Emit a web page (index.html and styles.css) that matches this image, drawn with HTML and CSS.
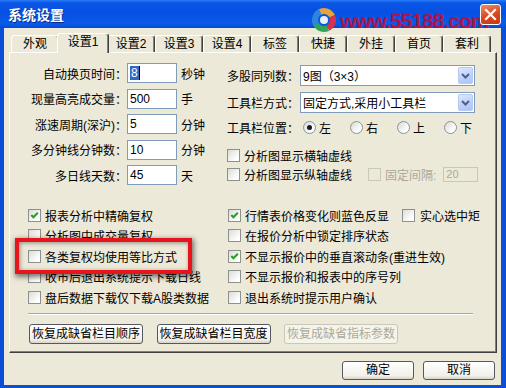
FILE: index.html
```html
<!DOCTYPE html>
<html lang="zh-CN">
<head>
  <meta charset="UTF-8">
  <title>系统设置</title>
  <link rel="stylesheet" href="styles.css">
</head>
<body>
<div class="window">
  <div class="titlebar">
    <span class="title">系统设置</span>
    <svg class="swirl" width="26" height="26" viewBox="0 0 26 26">
      <circle cx="13" cy="13" r="9" fill="none" stroke="#e9a23a" stroke-width="6" stroke-dasharray="15 42" transform="rotate(-120 13 13)"/>
      <circle cx="13" cy="13" r="9" fill="none" stroke="#d8324f" stroke-width="6" stroke-dasharray="14 43" transform="rotate(-25 13 13)"/>
      <circle cx="13" cy="13" r="9" fill="none" stroke="#33a35c" stroke-width="6" stroke-dasharray="14 43" transform="rotate(65 13 13)"/>
      <circle cx="13" cy="13" r="9" fill="none" stroke="#2f86d8" stroke-width="6" stroke-dasharray="15 42" transform="rotate(150 13 13)"/>
      <circle cx="13" cy="13" r="4" fill="#e8f0f8"/>
    </svg>
    <span class="site">www.55188.com</span>
    <span class="close">
      <svg width="19" height="19" viewBox="0 0 19 19"><path d="M5 5 L14 14 M14 5 L5 14" stroke="#fff" stroke-width="2.2" stroke-linecap="square"/></svg>
    </span>
  </div>

  <div class="frame">
    <div class="tabs">
      <span class="tab">外观</span>
      <span class="tab active">设置1</span>
      <span class="tab">设置2</span>
      <span class="tab">设置3</span>
      <span class="tab">设置4</span>
      <span class="tab">标签</span>
      <span class="tab">快捷</span>
      <span class="tab">外挂</span>
      <span class="tab">首页</span>
      <span class="tab">套利</span>
    </div>

    <div class="panel">
      <div class="top">
        <div class="fields">
          <div class="field"><label>自动换页时间：</label><span class="input"><span class="sel">8</span></span><span class="unit">秒钟</span></div>
          <div class="field"><label>现量高亮成交量：</label><span class="input">500</span><span class="unit">手</span></div>
          <div class="field"><label>涨速周期(深沪)：</label><span class="input">5</span><span class="unit">分钟</span></div>
          <div class="field"><label>多分钟线分钟数：</label><span class="input">10</span><span class="unit">分钟</span></div>
          <div class="field"><label>多日线天数：</label><span class="input">45</span><span class="unit">天</span></div>
        </div>

        <div class="options">
          <div class="opt-row first">
            <span class="lbl">多股同列数：</span>
            <span class="combo"><span class="combo-text">9图（3×3）</span><span class="drop"><svg width="13" height="15" viewBox="0 0 13 15"><path d="M3 6 L6.5 9.5 L10 6" fill="none" stroke="#4d6185" stroke-width="2"/></svg></span></span>
          </div>
          <div class="opt-row second">
            <span class="lbl">工具栏方式：</span>
            <span class="combo"><span class="combo-text">固定方式,采用小工具栏</span><span class="drop"><svg width="13" height="15" viewBox="0 0 13 15"><path d="M3 6 L6.5 9.5 L10 6" fill="none" stroke="#4d6185" stroke-width="2"/></svg></span></span>
          </div>
          <div class="opt-row radios">
            <span class="lbl">工具栏位置：</span>
            <span class="ritem"><span class="radio on"></span>左</span>
            <span class="ritem"><span class="radio"></span>右</span>
            <span class="ritem"><span class="radio"></span>上</span>
            <span class="ritem"><span class="radio"></span>下</span>
          </div>
          <div class="opt-row check1"><span class="cb"></span><span class="ctext">分析图显示横轴虚线</span></div>
          <div class="opt-row check2">
            <span class="cb"></span><span class="ctext">分析图显示纵轴虚线</span>
            <span class="cb off gap-cb"></span><span class="ctext dim">固定间隔:</span>
            <span class="input small off">20</span>
          </div>
        </div>
      </div>

      <div class="checks">
        <div class="col left">
          <div class="crow"><span class="cb"><svg width="11" height="11" viewBox="0 0 11 11"><path d="M2.3 5 L4.4 7.3 L8.8 2.8" fill="none" stroke="#21a121" stroke-width="2"/></svg></span><span class="ctext">报表分析中精确复权</span></div>
          <div class="crow"><span class="cb"></span><span class="ctext">分析图中成交量复权</span></div>
          <div class="crow"><span class="cb"></span><span class="ctext">各类复权均使用等比方式</span></div>
          <div class="crow"><span class="cb"></span><span class="ctext">收市后退出系统提示下载日线</span></div>
          <div class="crow"><span class="cb"></span><span class="ctext">盘后数据下载仅下载A股类数据</span></div>
        </div>
        <div class="col right">
          <div class="crow"><span class="cb"><svg width="11" height="11" viewBox="0 0 11 11"><path d="M2.3 5 L4.4 7.3 L8.8 2.8" fill="none" stroke="#21a121" stroke-width="2"/></svg></span><span class="ctext">行情表价格变化则蓝色反显</span><span class="cb solid-cb"></span><span class="ctext solid-text">实心选中矩</span></div>
          <div class="crow"><span class="cb"></span><span class="ctext">在报价分析中锁定排序状态</span></div>
          <div class="crow"><span class="cb"><svg width="11" height="11" viewBox="0 0 11 11"><path d="M2.3 5 L4.4 7.3 L8.8 2.8" fill="none" stroke="#21a121" stroke-width="2"/></svg></span><span class="ctext">不显示报价中的垂直滚动条(重进生效)</span></div>
          <div class="crow"><span class="cb"></span><span class="ctext">不显示报价和报表中的序号列</span></div>
          <div class="crow"><span class="cb"></span><span class="ctext">退出系统时提示用户确认</span></div>
        </div>
      </div>

      <div class="sep"></div>

      <div class="actions">
        <span class="btn wide">恢复成缺省栏目顺序</span>
        <span class="btn wide">恢复成缺省栏目宽度</span>
        <span class="btn wide disabled">恢复成缺省指标参数</span>
      </div>

      <div class="highlight"></div>
    </div>

    <div class="footer">
      <span class="btn small-btn">确定</span>
      <span class="btn small-btn">取消</span>
    </div>
  </div>
</div>
</body>
</html>
```

FILE: styles.css
```css
body {
  margin: 0;
  font-family: "Liberation Sans", "Noto Sans CJK SC", sans-serif;
  font-size: 12px;
  color: #000;
}
.window {
  width: 506px;
  height: 388px;
  display: flex;
  flex-direction: column;
  overflow: hidden;
}

/* title bar */
.titlebar {
  height: 28px;
  flex: none;
  position: relative;
  z-index: 3;
  display: flex;
  align-items: center;
  background: linear-gradient(180deg, #2a7cf6 0%, #0a56e6 10%, #0650e2 45%, #0a5ae8 85%, #0648d6 100%);
}
.title {
  margin-left: 8px;
  color: #fff;
  font-family: "Noto Sans CJK SC", sans-serif;
  font-weight: bold;
  font-size: 14px;
  line-height: 16px;
  text-shadow: 1px 1px 0 #0a2a8a;
}
.swirl {
  position: absolute;
  left: 311px;
  top: 7px;
}
.site {
  position: absolute;
  left: 340px;
  top: 10px;
  font-family: "Liberation Sans", sans-serif;
  font-weight: bold;
  font-size: 21px;
  line-height: 21px;
  letter-spacing: -1px;
  color: #a8164e;
}
.close {
  margin-left: auto;
  margin-right: 5px;
  width: 21px;
  height: 21px;
  box-sizing: border-box;
  border: 1px solid #fff;
  border-radius: 3px;
  background: linear-gradient(160deg, #ef8c6a, #d8461f 55%, #c23a14);
  display: flex;
  align-items: center;
  justify-content: center;
  position: relative;
}

/* frame */
.frame {
  flex: 1;
  display: flex;
  flex-direction: column;
  background: #ece9d8;
  border-style: solid;
  border-color: #0c4fd7;
  border-width: 0 5px 3px 4px;
}

/* tabs */
.tabs {
  display: flex;
  align-items: flex-end;
  height: 19px;
  margin-top: 5px;
  padding-left: 7px;
  position: relative;
  z-index: 1;
}
.tab {
  width: 48px;
  height: 17px;
  box-sizing: border-box;
  border: 1px solid;
  border-color: #fff #404040 transparent #fff;
  border-bottom: none;
  border-radius: 3px 3px 0 0;
  box-shadow: inset -1px 0 #808080;
  background: #ece9d8;
  text-align: center;
  line-height: 16px;
}
.tab.active {
  width: 52px;
  height: 20px;
  margin: 0 -2px -1px;
  position: relative;
  z-index: 1;
}

/* panel */
.panel {
  margin-left: 5px;
  width: 488px;
  height: 301px;
  box-sizing: border-box;
  border: 1px solid;
  border-color: #fff #404040 #404040 #fff;
  box-shadow: inset -1px -1px #808080;
  position: relative;
}
.top {
  display: flex;
  margin-top: 10px;
}
.fields {
  margin-left: 19px;
  width: 198px;
  display: flex;
  flex-direction: column;
  gap: 5.5px;
}
.field {
  display: flex;
  align-items: center;
  height: 20px;
}
.field label {
  width: 98px;
  text-align: right;
}
.input {
  display: block;
  width: 50px;
  height: 20px;
  box-sizing: border-box;
  border: 1px solid #7f9db9;
  background: #fff;
  padding-left: 2px;
  line-height: 18px;
}
.sel {
  background: #316ac5;
  color: #fff;
  padding: 0 1px;
  border-right: 1px solid #000;
}
.unit {
  margin-left: 4px;
}

.options {
  display: flex;
  flex-direction: column;
}
.opt-row {
  display: flex;
  align-items: center;
  height: 18px;
}
.opt-row.first { margin-top: 2px; height: 21px; }
.opt-row.second { margin-top: 6px; height: 21px; }
.opt-row.radios { margin-top: 5px; }
.opt-row.check1 { margin-top: 10px; }
.opt-row.check2 { margin-top: 1px; }
.lbl {
  width: 72px;
}
.combo {
  width: 175px;
  height: 21px;
  margin-left: 1px;
  box-sizing: border-box;
  border: 1px solid #7f9db9;
  background: #fff;
  display: flex;
  align-items: center;
}
.combo-text {
  flex: 1;
  padding-left: 2px;
}
.drop {
  width: 15px;
  height: 17px;
  margin-right: 1px;
  box-sizing: border-box;
  border: 1px solid #b6c9f4;
  border-radius: 2px;
  background: linear-gradient(160deg, #dfe8fe, #bacffb 60%, #aec4f6);
  display: flex;
  align-items: center;
  justify-content: center;
}

.radios .lbl {
  margin-right: 4px;
}
.ritem {
  width: 47px;
  display: flex;
  align-items: center;
}
.radio {
  width: 13px;
  height: 13px;
  box-sizing: border-box;
  border: 1px solid #8593a3;
  border-radius: 50%;
  background: linear-gradient(135deg, #d8d8d2, #fff 75%);
  margin-right: 3px;
  display: flex;
  align-items: center;
  justify-content: center;
}
.radio.on::after {
  content: "";
  width: 5px;
  height: 5px;
  border-radius: 50%;
  background: #1a1a1a;
}

.cb {
  width: 13px;
  height: 13px;
  flex: none;
  box-sizing: border-box;
  border: 1px solid #8e8f8f;
  background: linear-gradient(135deg, #dcdcd6, #fff 80%);
  display: flex;
  align-items: center;
  justify-content: center;
}
.cb.off {
  border-color: #cac8bb;
  background: #ece9d8;
}
.ctext {
  margin-left: 4px;
}
.gap-cb {
  margin-left: 16px;
}
.dim {
  color: #aca899;
}
.input.small {
  width: 35px;
  height: 15px;
  margin-left: 7px;
  line-height: 13px;
  font-size: 11px;
}
.input.off {
  border-color: #cac8bb;
  background: #ece9d8;
  color: #aca899;
}

/* bottom checks */
.checks {
  display: flex;
  margin-top: 20px;
}
.col.left {
  margin-left: 18px;
  width: 200px;
}
.crow {
  height: 20.5px;
  display: flex;
  align-items: center;
  white-space: nowrap;
}
.solid-cb {
  margin-left: 13px;
}
.solid-text {
  margin-left: 5px;
}

.sep {
  margin: 5.5px 0 0 18px;
  width: 445px;
  border-top: 1px solid #aca899;
  border-bottom: 1px solid #fff;
}

.actions {
  display: flex;
  gap: 13.5px;
  margin: 9px 0 0 19px;
}
.btn {
  display: block;
  height: 20px;
  box-sizing: border-box;
  border: 1px solid #55585e;
  border-radius: 3px;
  background: linear-gradient(#fff, #f1f0ea 80%, #d8d3c6);
  text-align: center;
  line-height: 18px;
}
.btn.wide {
  width: 114px;
}
.btn.disabled {
  border-color: #c9c7ba;
  color: #aca899;
  background: #f5f4ea;
}

.highlight {
  position: absolute;
  left: 5px;
  top: 185px;
  width: 177px;
  height: 36px;
  box-sizing: border-box;
  border: 4px solid #e8141c;
  box-shadow: 1px 2px 5px 1px rgba(0, 0, 0, 0.5), inset 1px 1px 4px rgba(0, 0, 0, 0.4);
}

.footer {
  display: flex;
  justify-content: flex-end;
  gap: 9px;
  margin-top: 8px;
  padding-right: 6px;
}
.btn.small-btn {
  width: 72px;
  height: 19px;
  line-height: 17px;
}
```
